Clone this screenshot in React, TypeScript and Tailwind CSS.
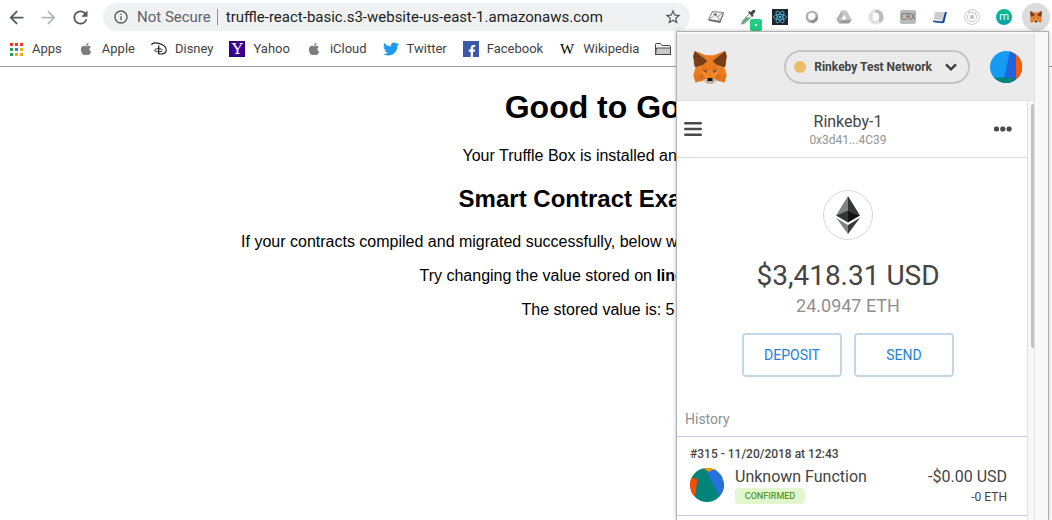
import type { ReactNode } from 'react';
import { MdArrowBack, MdArrowForward, MdRefresh, MdInfoOutline, MdStarBorder } from 'react-icons/md';
import { FaApple, FaTwitter, FaFacebookF } from 'react-icons/fa';

const FOX: [string, string[]][] = [
  ['#e2761b', ['274.1,35.5 174.6,109.4 193,65.8']],
  ['#e4761b', [
    '44.4,35.5 143.1,110.1 125.6,65.8',
    '238.3,206.8 211.8,247.4 268.5,263 284.8,207.7',
    '33.9,207.7 50.1,263 106.8,247.4 80.3,206.8',
    '103.6,138.2 87.8,162.1 144.1,164.6 142.1,104.1',
    '214.9,138.2 175.9,103.4 174.6,164.6 230.8,162.1',
    '106.8,247.4 140.6,230.9 111.4,208.1',
    '177.9,230.9 211.8,247.4 207.1,208.1',
  ]],
  ['#d7c1b3', [
    '211.8,247.4 177.9,230.9 180.6,253 180.3,262.3',
    '106.8,247.4 138.3,262.3 138.1,253 140.6,230.9',
  ]],
  ['#233447', ['138.8,193.5 110.6,185.2 130.5,176.1', '179.7,193.5 188,176.1 208,185.2']],
  ['#cd6116', [
    '106.8,247.4 111.6,206.8 80.3,207.7',
    '207,206.8 211.8,247.4 238.3,207.7',
    '230.8,162.1 174.6,164.6 179.8,193.5 188.1,176.1 208.1,185.2',
    '110.6,185.2 130.6,176.1 138.8,193.5 144.1,164.6 87.8,162.1',
  ]],
  ['#e4751f', [
    '87.8,162.1 111.4,208.1 110.6,185.2',
    '208.1,185.2 207.1,208.1 230.8,162.1',
    '144.1,164.6 138.8,193.5 145.4,227.6 146.9,182.7',
    '174.6,164.6 171.9,182.6 173.1,227.6 179.8,193.5',
  ]],
  ['#f6851b', [
    '179.8,193.5 173.1,227.6 177.9,230.9 207.1,208.1 208.1,185.2',
    '110.6,185.2 111.4,208.1 140.6,230.9 145.4,227.6 138.8,193.5',
  ]],
  ['#c0ad9e', ['180.3,262.3 180.6,253 178.1,250.8 140.4,250.8 138.1,253 138.3,262.3 106.8,247.4 117.8,256.4 140.1,271.9 178.4,271.9 200.8,256.4 211.8,247.4']],
  ['#161616', ['177.9,230.9 173.1,227.6 145.4,227.6 140.6,230.9 138.1,253 140.4,250.8 178.1,250.8 180.6,253']],
  ['#763d16', [
    '278.3,114.2 286.8,73.4 274.1,35.5 177.9,106.9 214.9,138.2 267.2,153.5 278.8,140 273.8,136.4 281.8,129.1 275.6,124.3 283.6,118.2',
    '31.8,73.4 40.3,114.2 34.9,118.2 42.9,124.3 36.8,129.1 44.8,136.4 39.8,140 51.3,153.5 103.6,138.2 140.6,106.9 44.4,35.5',
  ]],
  ['#f07b1c', [
    '267.2,153.5 214.9,138.2 230.8,162.1 207.1,208.1 238.3,207.7 284.8,207.7',
    '103.6,138.2 51.3,153.5 33.9,207.7 80.3,207.7 111.4,208.1 87.8,162.1',
    '174.6,164.6 177.9,106.9 193.1,65.8 125.6,65.8 140.6,106.9 144.1,164.6 145.3,182.8 145.4,227.6 173.1,227.6 173.3,182.8',
  ]],
];

function Fox({ className }: { className: string }) {
  return (
    <svg viewBox="31 35 257 238" preserveAspectRatio="none" className={className} aria-hidden="true">
      {FOX.map(([fill, shapes]) =>
        shapes.map((points) => <polygon key={points} points={points} fill={fill} stroke={fill} strokeWidth="1" />),
      )}
    </svg>
  );
}

function AppsIcon() {
  const colors = ['#f4372d', '#f4372d', '#f4372d', '#2e9e4f', '#2b7de9', '#f9a825', '#2e9e4f', '#f9a825', '#f9a825'];
  return (
    <svg viewBox="0 0 16 16" className="size-4">
      {colors.map((c, i) => (
        <rect key={i} x={2 + (i % 3) * 5} y={2 + Math.floor(i / 3) * 5} width="3" height="3" fill={c} />
      ))}
    </svg>
  );
}

function DisneyIcon() {
  return (
    <svg viewBox="0 0 16 16" className="size-4" fill="none" stroke="#222" strokeLinecap="round">
      <path d="M1 3.800C.2 2.600 2 1.900 4 1.900c5 0 11.200 2.600 11.200 7.300 0 3.600-4.600 4.400-7.600 3.500" strokeWidth="1.100" />
      <path d="M7.700 5v7.500" strokeWidth="1.300" />
      <path d="M11 8.400C8 7 3.600 7.700 3.600 9.300c0 1.400 4.200 2 7.300 1" strokeWidth="1" />
    </svg>
  );
}

function FolderIcon() {
  return (
    <svg viewBox="0 0 16 16" className="size-4" stroke="#4a4a4a" strokeLinejoin="round">
      <path d="M.5 13.500V3.200q0-.7.7-.7h4.300l1.500 2h7.800q.7 0 .7.700v8.300z" fill="#f4f4f4" />
      <path d="M.5 13.500L1.500 7h14v6.500z" fill="#c9c9c9" />
    </svg>
  );
}

const BOOKMARKS: { label: string; icon: ReactNode }[] = [
  { label: 'Apps', icon: <AppsIcon /> },
  { label: 'Apple', icon: <FaApple className="size-3.5 text-[#7d7d7d]" /> },
  { label: 'Disney', icon: <DisneyIcon /> },
  {
    label: 'Yahoo',
    icon: (
      <span className="flex size-4 items-center justify-center bg-radial from-[#4a02b8] to-[#2b0266] font-['Liberation_Serif',serif] text-[17px] leading-4 text-white">Y</span>
    ),
  },
  { label: 'iCloud', icon: <FaApple className="size-3.5 text-[#7d7d7d]" /> },
  { label: 'Twitter', icon: <FaTwitter className="size-4 text-[#1d9bf0]" /> },
  {
    label: 'Facebook',
    icon: (
      <span className="flex size-4 items-end justify-end bg-[#3a59a8] pr-0.5">
        <FaFacebookF className="h-3 w-2.5 text-white" />
      </span>
    ),
  },
  {
    label: 'Wikipedia',
    icon: <span className="font-['Liberation_Serif',serif] text-[15px] leading-4 text-black">W</span>,
  },
];

function ReactExt() {
  return (
    <svg viewBox="0 0 16 16" className="size-4" fill="none" stroke="#4fb8dc" strokeWidth=".8">
      <rect width="16" height="16" fill="#20232a" stroke="none" />
      <ellipse cx="8" cy="8" rx="6.600" ry="2.500" />
      <ellipse cx="8" cy="8" rx="6.600" ry="2.500" transform="rotate(60 8 8)" />
      <ellipse cx="8" cy="8" rx="6.600" ry="2.500" transform="rotate(120 8 8)" />
      <circle cx="8" cy="8" r="1.300" fill="#4fb8dc" stroke="none" />
    </svg>
  );
}

const EXTENSIONS: { name: string; icon: ReactNode }[] = [
  {
    name: 'Mail notes',
    icon: (
      <svg viewBox="0 0 16 16" className="size-4" strokeLinejoin="round">
        <path d="M4.300 2.500L15.600 3.600 12 12.300.6 10.500z" fill="#f2f2f2" stroke="#666" strokeWidth=".8" />
        <path d="M.6 10.500l11.400 1.800 3.600-8.500v1.500L12.300 14 .6 11.800z" fill="#666" />
        <path d="M4.500 3l4.400 4.800L15 4M1.500 10.200l5-4.200M11.500 11.500L10 7" fill="none" stroke="#888" strokeWidth=".7" />
        <circle cx="7.500" cy="5.500" r="1.300" fill="#666" />
      </svg>
    ),
  },
  {
    name: 'Color picker',
    icon: (
      <span className="relative flex">
        <svg viewBox="0 0 16 16" className="size-4">
          <path d="M9.300 4.500l2.600 2.600L5 14l-3.600 1.200L2.500 12z" fill="#f5f5f5" stroke="#777" strokeWidth=".8" />
          <path d="M6 8.500h4L4.600 13.600l-2.400.9.800-2.300z" fill="#3bb573" />
          <path d="M8 3l1.500-.7 1.500.7 1.800-2q1-.8 2 .2t.2 2L13 5l.5 1.500-.9 1.600z" fill="#3f4645" />
        </svg>
        <span className="absolute left-2.5 top-2.5 flex size-3 items-center justify-center rounded-xs bg-[#22cc84]">
          <span className="size-0.5 bg-white" />
        </span>
      </span>
    ),
  },
  { name: 'React tools', icon: <ReactExt /> },
  {
    name: 'Ring',
    icon: (
      <svg viewBox="0 0 16 16" className="size-4">
        <circle cx="8" cy="8" r="6.200" fill="#a9a9a9" />
        <circle cx="7.700" cy="7.300" r="4.200" fill="#c9c9c9" />
        <path d="M8 14.200Q13.500 13.500 14.200 8L11 9Q10 11 7 11.500z" fill="#8e8e8e" />
        <circle cx="7.600" cy="7.400" r="3.400" fill="#fff" />
      </svg>
    ),
  },
  {
    name: 'Drive',
    icon: (
      <svg viewBox="0 0 16 16" className="size-4">
        <path d="M5.500 1.500L.3 10.400l2.500 4L8 5.700z" fill="#b3b3b3" />
        <path d="M5.500 1.500h5l5.300 8.900h-5.200z" fill="#c6c6c6" />
        <path d="M5.500 10.400h10.300l-2.600 4H2.800z" fill="#9b9b9b" />
        <path d="M8 6l2.300 4.400H5.700z" fill="#fff" />
      </svg>
    ),
  },
  {
    name: 'Swirl',
    icon: (
      <svg viewBox="0 0 16 16" className="size-4">
        <circle cx="8" cy="8" r="7.500" fill="#dedede" />
        <path d="M7 .6A7.500 7.500 0 0 1 12 14.300L9.500 12Q13 8 9.500 4.500L7 3z" fill="#bdbdbd" />
        <ellipse cx="7.700" cy="8" rx="3.200" ry="4.200" fill="#fff" />
        <path d="M4 4.500L7.500.500M12 11.500L8.500 15.500" stroke="#fff" fill="none" strokeWidth=".8" />
      </svg>
    ),
  },
  {
    name: 'CRX viewer',
    icon: (
      <span className="flex h-3.5 w-4 items-center justify-center rounded-xs bg-[#bcbcbc] font-['Noto_Sans',sans-serif] text-[8px] leading-3.5 text-[#666]">CRX</span>
    ),
  },
  {
    name: 'Documents',
    icon: (
      <svg viewBox="0 0 16 16" className="size-4">
        <path d="M2.800 2.800l10 .2-2.300 8.700-8.800-.7z" fill="#d3d6d9" />
        <path d="M3.500 4.700l8 .3M3 6.700l8 .3M2.500 8.700l8 .3" stroke="#b7bcc1" strokeWidth=".7" />
        <path d="M12.700 3.200l2.300-.5-2.500 10q-.5 1.800-2.500 1.600L1.700 13.300q-1-.5-.5-2.300l8.300 1q1 0 1.300-1z" fill="#164f99" />
        <path d="M1.700 10.500l8.300.9-.3 1-8.400-.9z" fill="#e8eef5" />
      </svg>
    ),
  },
  {
    name: 'Orbit',
    icon: (
      <svg viewBox="0 0 16 16" className="size-4" fill="none" stroke="#c4c4c4">
        <circle cx="8" cy="8" r="7.400" strokeWidth=".9" />
        <circle cx="8" cy="8" r="4.700" strokeWidth=".9" />
        <circle cx="8" cy="8" r="2.200" fill="#c4c4c4" stroke="none" />
        <circle cx="5" cy="2.800" r="1.400" fill="#c4c4c4" stroke="#fff" strokeWidth=".5" />
        <circle cx="11.500" cy="4.800" r="1.200" fill="#c4c4c4" stroke="#fff" strokeWidth=".5" />
      </svg>
    ),
  },
  {
    name: 'Profile',
    icon: (
      <span className="flex size-4 items-center justify-center rounded-full bg-linear-to-b from-[#0bbf8d] to-[#08a2ae] pb-0.5 font-['Open_Sans',sans-serif] text-[11px] leading-3 text-white">m</span>
    ),
  },
  {
    name: 'MetaMask',
    icon: (
      <span className="flex size-7 items-center justify-center rounded-full bg-[#dcdcdc]">
        <Fox className="h-3 w-3" />
      </span>
    ),
  },
];

function BrowserBar() {
  return (
    <header className="border-b border-[#a0a0a0] bg-white pb-[7px] pt-[3px]">
      <div className="flex h-7 items-center text-[#54575b]">
        <button aria-label="Back" className="flex w-8 justify-center"><MdArrowBack className="size-[21px]" /></button>
        <button aria-label="Forward" className="flex w-8 justify-center text-[#b5b7b9]"><MdArrowForward className="size-[21px]" /></button>
        <button aria-label="Reload" className="flex w-8 justify-center"><MdRefresh className="size-[21px]" /></button>
        <div className="ml-[7px] mr-2.5 flex h-7 flex-1 items-center rounded-full bg-[#eff1f2] pl-2.5 pr-2">
          <MdInfoOutline className="size-4" />
          <span className="ml-2 text-[15px] leading-4 text-[#5f6368]">Not Secure</span>
          <span className="ml-1.5 h-4 w-px bg-[#8f9296]" />
          <input
            aria-label="Address"
            readOnly
            value="truffle-react-basic.s3-website-us-east-1.amazonaws.com"
            className="ml-2 min-w-0 flex-1 bg-transparent text-[15px] leading-4 text-[#1c1e21] outline-none"
          />
          <button aria-label="Bookmark this page"><MdStarBorder className="size-[18px]" /></button>
        </div>
        <div className="flex">
          {EXTENSIONS.map((e) => (
            <button key={e.name} aria-label={e.name} className="flex h-7 w-8 items-center justify-center">{e.icon}</button>
          ))}
        </div>
      </div>
      <nav className="mt-2 flex h-5 items-center gap-4 pl-2 text-[13px] leading-4 text-[#3f4246]">
        {BOOKMARKS.map((b) => (
          <a key={b.label} href="#" className="flex items-center gap-2">
            <span className="flex size-4 items-center justify-center">{b.icon}</span>
            {b.label}
          </a>
        ))}
        <button aria-label="More bookmarks"><FolderIcon /></button>
      </nav>
    </header>
  );
}

function Page() {
  return (
    <main className="flex-1 pl-36 pt-[22px] text-center font-['Liberation_Sans',Arial,sans-serif] text-base leading-[18px] text-black">
      <h1 className="text-[32px] font-bold leading-[37px]">Good to Go!</h1>
      <p className="mt-[21px]">Your Truffle Box is installed and ready.</p>
      <h2 className="my-5 text-2xl font-bold leading-7">Smart Contract Example</h2>
      <div className="space-y-4">
        <p>If your contracts compiled and migrated successfully, below will show a stored value of 5 (by default).</p>
        <p>Try changing the value stored on <strong>line 59</strong> of App.js.</p>
        <p>The stored value is: 5</p>
      </div>
    </main>
  );
}

function EthLogo() {
  return (
    <svg viewBox="0 0 24 38" className="h-[38px] w-6" aria-hidden="true">
      <path d="M12 0L0 19.500l12-5.300z" fill="#828384" />
      <path d="M12 0v14.200l12 5.300z" fill="#343535" />
      <path d="M0 19.500l12 7V14.200z" fill="#343535" />
      <path d="M24 19.500l-12 7V14.200z" fill="#131313" />
      <path d="M0 21.800L12 38v-9z" fill="#828384" />
      <path d="M24 21.800L12 38v-9z" fill="#3a3a3a" />
    </svg>
  );
}

function Wallet() {
  return (
    <aside className="absolute bottom-0 right-[3px] top-[31px] flex w-[373px] flex-col overflow-hidden border-x border-t border-[#b0b0b0] bg-[#f8f8f8] pt-0.5 pr-[13px] text-[#444] shadow-[0_0_4px_rgba(0,0,0,0.25)]">
      <div className="flex h-[67px] shrink-0 items-center border-b border-r border-[#dfdfdf] bg-[#ebebeb] pl-4 pr-3">
        <Fox className="h-[33px] w-[34px]" />
        <button className="ml-auto flex h-[34px] items-center rounded-full border-2 border-[#c5c5c5] pl-2 pr-[11px] text-xs font-bold leading-4">
          <span className="mr-2 size-3 rounded-full bg-[#ebbd66]" />
          Rinkeby Test Network
          <svg viewBox="0 0 12 8" className="ml-[13px] h-2 w-3" fill="none" stroke="#3d3d3d" strokeWidth="2.400">
            <path d="M1 1.300l5 5 5-5" />
          </svg>
        </button>
        <button aria-label="Accounts" className="ml-5">
          <svg viewBox="0 0 32 32" className="size-8 rounded-full">
            <rect width="32" height="32" fill="#169bf2" />
            <path d="M20 0h12v32H13z" fill="#2263df" />
            <path d="M19 0h13v32h-6V4z" fill="#ff5a05" />
            <path d="M0 26.500l24 .3 2 5.200H0z" fill="#028578" />
          </svg>
        </button>
      </div>
      <div className="relative min-h-0 flex-1 overflow-hidden border-r border-[#e3e3e3] bg-[#f8f8f8] pr-1.5">
        <div className="min-h-full border-r border-[#dfdfdf] bg-white">
          <div className="flex h-[57px] items-center justify-between border-b border-[#d8dce0] pl-[7px] pr-[15px]">
            <button aria-label="Menu">
              <svg viewBox="0 0 18 14" className="h-3.5 w-[18px]" stroke="#4a4a4a" strokeWidth="2.600" strokeLinecap="round">
                <path d="M1.300 1.300h15.400M1.300 7h15.400M1.300 12.700h15.400" />
              </svg>
            </button>
            <div className="pt-0.5 text-center">
              <div className="text-base leading-5">Rinkeby-1</div>
              <div className="text-xs leading-4 text-[#949494]">0x3d41...4C39</div>
            </div>
            <button aria-label="Account options">
              <svg viewBox="0 0 18 6" className="h-1.5 w-[18px]" fill="#4a4a4a">
                <rect x="0" y=".5" width="5" height="5" rx="1.800" />
                <rect x="6.300" y=".5" width="5" height="5" rx="1.800" />
                <rect x="12.600" y=".5" width="5" height="5" rx="1.800" />
              </svg>
            </button>
          </div>
          <div className="flex flex-col items-center pr-2 pt-8">
            <div className="flex size-[50px] items-center justify-center rounded-full border border-[#d8d8d8]"><EthLogo /></div>
            <div className="mt-[18px] text-[28px] leading-9">$3,418.31 USD</div>
            <div className="text-lg leading-6 text-[#8f8f8f]">24.0947 ETH</div>
            <div className="mt-[15px] flex gap-3 text-sm text-[#2380d6]">
              <button className="h-11 w-[100px] rounded-sm border-2 border-[#c2d8ea]">DEPOSIT</button>
              <button className="h-11 w-[100px] rounded-sm border-2 border-[#c2d8ea]">SEND</button>
            </div>
          </div>
          <h3 className="mt-[33px] border-b border-[#c6cdd6] pb-2 pl-2 text-sm leading-[18px] text-[#8f8f8f]">History</h3>
          <article className="border-b border-[#c6cdd6] pb-2 pl-[13px] pr-5 pt-2">
            <div className="text-xs font-medium leading-[18px]">#315 - 11/20/2018 at 12:43</div>
            <div className="mt-1 flex">
              <svg viewBox="0 0 34 34" className="mt-px size-[34px] rounded-full" aria-hidden="true">
                <rect width="34" height="34" fill="#028578" />
                <path d="M13 0h21v14z" fill="#f79a10" />
                <path d="M17 4.500L25 1l7 7 2 12-4.500 9z" fill="#2372de" />
                <path d="M0 9l7.500 2L5 28H0z" fill="#fb4a06" />
              </svg>
              <div className="ml-[11px]">
                <div className="text-base leading-5">Unknown Function</div>
                <div className="mt-px flex h-4 w-[70px] items-center justify-center rounded-sm bg-[#e3f7ce] text-[9px] font-medium leading-3 text-[#5b9a1f]">CONFIRMED</div>
              </div>
              <div className="ml-auto text-right">
                <div className="text-base leading-5">-$0.00 USD</div>
                <div className="text-xs leading-5">-0 ETH</div>
              </div>
            </div>
          </article>
        </div>
        <div className="absolute right-0 top-[3px] h-[244px] w-[3px] rounded-l-full bg-[#c1c1c1]" />
      </div>
    </aside>
  );
}

export default function App() {
  return (
    <div className="relative flex min-h-screen flex-col overflow-hidden bg-white font-['Roboto',sans-serif]">
      <BrowserBar />
      <Page />
      <Wallet />
    </div>
  );
}
